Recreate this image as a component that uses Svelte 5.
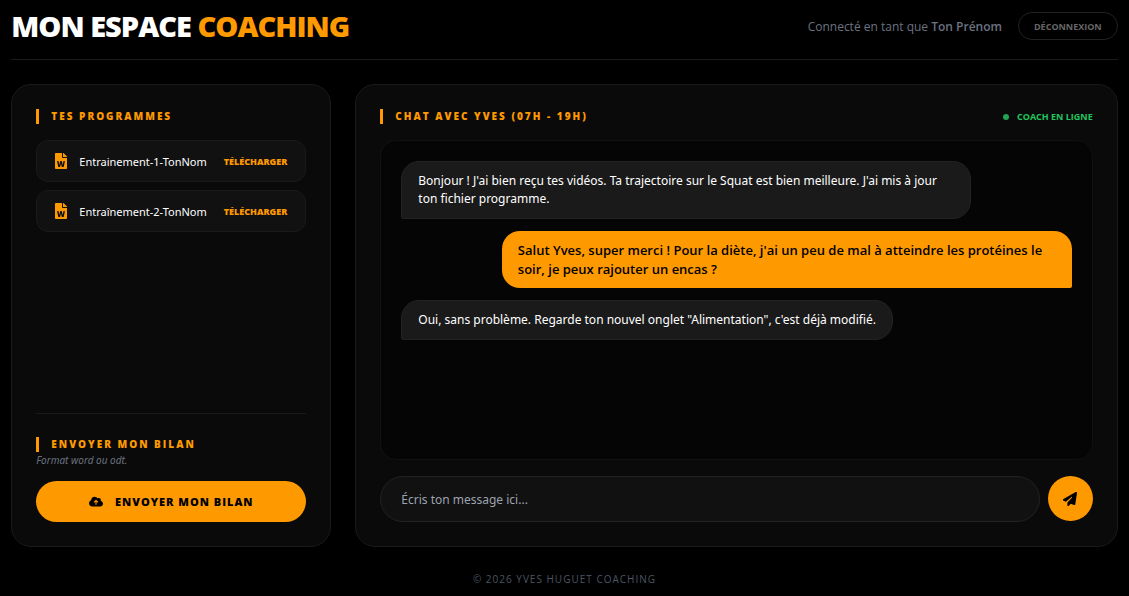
<script>
  const userName = "Ton Prénom";

  const programmes = [
    { name: "Entrainement-1-TonNom", url: "#programme-1" },
    { name: "Entraînement-2-TonNom", url: "#programme-2" }
  ];

  let messages = $state([
    { from: "coach", text: "Bonjour ! J'ai bien reçu tes vidéos. Ta trajectoire sur le Squat est bien meilleure. J'ai mis à jour ton fichier programme." },
    { from: "client", text: "Salut Yves, super merci ! Pour la diète, j'ai un peu de mal à atteindre les protéines le soir, je peux rajouter un encas ?" },
    { from: "coach", text: "Oui, sans problème. Regarde ton nouvel onglet \"Alimentation\", c'est déjà modifié." }
  ]);

  let draft = $state("");

  function sendMessage(event) {
    event.preventDefault();
    if (!draft.trim()) return;
    messages.push({ from: "client", text: draft.trim() });
    draft = "";
  }
</script>

<div class="page">
  <header>
    <h1>Mon espace <span>coaching</span></h1>
    <div class="account">
      <p>Connecté en tant que <strong>{userName}</strong></p>
      <button type="button" class="btn-logout">Déconnexion</button>
    </div>
  </header>

  <main>
    <aside class="card">
      <h2>Tes programmes</h2>
      <ul class="files">
        {#each programmes as file}
          <li>
            <svg viewBox="0 0 384 512" aria-hidden="true"><path d="M224 136V0H24C10.7 0 0 10.7 0 24v464c0 13.3 10.7 24 24 24h336c13.3 0 24-10.7 24-24V160H248c-13.2 0-24-10.8-24-24zm57.1 120H305c7.7 0 13.4 7.1 11.7 14.7l-38 168c-1.2 5.5-6.1 9.3-11.7 9.3h-38c-5.5 0-10.3-3.8-11.6-9.1-25.8-103.5-20.8-81.2-25.6-110.5h-.5c-1.1 14.3-2.4 17.4-25.6 110.5-1.3 5.3-6.1 9.1-11.6 9.1H117c-5.6 0-10.5-3.9-11.7-9.4l-37.8-168c-1.7-7.5 4-14.6 11.7-14.6h24.5c5.7 0 10.7 4 11.8 9.7 15.6 78 20.1 109.5 21 122.2 1.6-10.2 7.3-32.7 29.4-122.7 1.3-5.4 6.1-9.1 11.7-9.1h29.1c5.6 0 10.4 3.8 11.7 9.2 24 100.4 28.8 124 29.6 129.4-.2-11.2-2.6-17.8 21.6-129.2 1-5.6 5.9-9.5 11.5-9.5zM384 121.9v6.1H256V0h6.1c6.4 0 12.5 2.5 17 7l97.9 98c4.5 4.5 7 10.6 7 16.9z" /></svg>
            <span class="file-name">{file.name}</span>
            <a href={file.url}>Télécharger</a>
          </li>
        {/each}
      </ul>

      <section class="bilan">
        <h2>Envoyer mon bilan</h2>
        <p>Format word ou odt.</p>
        <button type="button" class="btn-bilan">
          <svg viewBox="0 0 640 512" aria-hidden="true"><path d="M144 480C64.500 480 0 415.500 0 336c0-62.800 40.200-116.200 96.200-135.900c-.1-2.700-.2-5.400-.2-8.100c0-88.400 71.600-160 160-160c59.300 0 111 32.200 138.700 80.200C409.900 102 428.300 96 448 96c53 0 96 43 96 96c0 12.200-2.300 23.800-6.400 34.600C596 238.400 640 290.100 640 352c0 70.700-57.300 128-128 128H144zm79-217c-9.400 9.400-9.400 24.600 0 33.900s24.600 9.400 33.900 0l39-39V392c0 13.300 10.700 24 24 24s24-10.700 24-24V257.900l39 39c9.400 9.400 24.600 9.400 33.900 0s9.400-24.600 0-33.900l-80-80c-9.400-9.400-24.600-9.400-33.900 0l-80 80z" /></svg>
          Envoyer mon bilan
        </button>
      </section>
    </aside>

    <section class="card">
      <div class="chat-head">
        <h2>Chat avec Yves (07h - 19h)</h2>
        <span class="status">Coach en ligne</span>
      </div>

      <div class="messages">
        {#each messages as message}
          <p class="bubble {message.from}">{message.text}</p>
        {/each}
      </div>

      <form onsubmit={sendMessage}>
        <input type="text" bind:value={draft} placeholder="Écris ton message ici..." aria-label="Ton message" />
        <button type="submit" class="btn-send" aria-label="Envoyer">
          <svg viewBox="0 0 512 512" aria-hidden="true"><path d="M498.100 5.600c10.100 7 15.400 19.100 13.500 31.200l-64 416c-1.500 9.700-7.400 18.200-16 23s-18.900 5.400-28 1.600L284 427.700l-68.500 74.100c-8.900 9.700-22.900 12.900-35.200 8.100S160 493.200 160 480V396.400c0-4 1.500-7.800 4.200-10.700L331.800 202.800c5.800-6.300 5.600-16-.4-22s-15.700-6.400-22-.7L106 360.800 17.700 316.600C7.100 311.300 .3 300.700 0 288.900s5.900-22.800 16.100-28.700l448-256c10.700-6.100 23.900-5.500 34 1.400z" /></svg>
        </button>
      </form>
    </section>
  </main>

  <footer>© 2026 Yves Huguet Coaching</footer>
</div>

<style>
  :global(body) {
    background: #000;
  }

  .page {
    width: 98%;
    margin: 0 auto;
    font-family: "Noto Sans", "Open Sans", sans-serif;
    font-size: 12px;
    color: #fff;
  }

  h1, h2, p, ul { margin: 0; padding: 0; }

  h1, h2, .btn-bilan, .btn-logout, .status, .files a {
    font-family: "Open Sans", "Noto Sans", sans-serif;
    text-transform: uppercase;
  }

  input { font-family: inherit; }

  button { cursor: pointer; }

  svg { fill: currentColor; flex: none; }

  header {
    display: flex;
    justify-content: space-between;
    align-items: center;
    padding: 8px 0 15px;
    border-bottom: 1px solid #1a1a1a;
  }

  h1 {
    font-size: 29px;
    line-height: 36px;
    font-weight: 800;
    letter-spacing: -1px;
  }

  h1 span { color: #ff9900; }

  .account {
    display: flex;
    align-items: center;
    gap: 16px;
    color: #6b7280;
    font-family: "Open Sans", "Noto Sans", sans-serif;
  }

  .account strong { font-weight: 600; }

  .btn-logout {
    height: 28px;
    padding: 0 15px;
    border: 1px solid #222;
    border-radius: 14px;
    background: transparent;
    color: #666;
    font-size: 9px;
    font-weight: 700;
  }

  main {
    display: grid;
    grid-template-columns: 320px 1fr;
    gap: 24px;
    margin-top: 24px;
  }

  .card {
    display: flex;
    flex-direction: column;
    padding: 24px;
    background: #0a0a0a;
    border: 1px solid #1a1a1a;
    border-radius: 20px;
  }

  h2 {
    padding-left: 12px;
    border-left: 3px solid #ff9900;
    color: #ff9900;
    font-size: 10px;
    line-height: 15px;
    font-weight: 800;
    letter-spacing: 2px;
  }

  .files {
    display: flex;
    flex-direction: column;
    gap: 8px;
    margin-top: 16px;
    list-style: none;
  }

  .files li {
    display: flex;
    align-items: center;
    height: 40px;
    padding: 0 18px;
    background: #111;
    border: 1px solid #1a1a1a;
    border-radius: 12px;
  }

  .files svg {
    height: 16px;
    color: #ff9900;
  }

  .file-name {
    flex: 1;
    margin-left: 12px;
    font-size: 11px;
  }

  .files a {
    color: #ff9900;
    font-size: 9px;
    font-weight: 800;
    text-decoration: none;
  }

  .bilan {
    margin-top: auto;
    padding-top: 23px;
    border-top: 1px solid #1a1a1a;
  }

  .bilan p {
    margin-bottom: 12px;
    color: #6b7280;
    font-size: 10px;
    line-height: 17px;
    font-style: italic;
  }

  .btn-bilan {
    display: flex;
    align-items: center;
    justify-content: center;
    gap: 12px;
    width: 100%;
    height: 41px;
    border: none;
    border-radius: 21px;
    background: #ff9900;
    color: #000;
    font-size: 11px;
    font-weight: 800;
    letter-spacing: 1px;
  }

  .btn-bilan svg { width: 14px; }

  .chat-head {
    display: flex;
    align-items: center;
    justify-content: space-between;
  }

  .status {
    display: flex;
    align-items: center;
    gap: 8px;
    color: #22c55e;
    font-size: 9px;
    line-height: 15px;
    font-weight: 700;
  }

  .status::before {
    content: "";
    width: 6px;
    height: 6px;
    border-radius: 50%;
    background: #22a352;
  }

  .messages {
    display: flex;
    flex-direction: column;
    align-items: flex-start;
    gap: 12px;
    min-height: 278px;
    margin: 16px 0;
    padding: 20px;
    background: #050505;
    border: 1px solid #111;
    border-radius: 16px;
  }

  .bubble {
    box-sizing: border-box;
    max-width: 85%;
    padding: 10px 16px;
    border-radius: 18px;
    line-height: 18px;
  }

  .coach {
    background: #1a1a1a;
    border: 1px solid #222;
    border-bottom-left-radius: 2px;
  }

  .client {
    align-self: flex-end;
    padding-bottom: 9px;
    background: #ff9900;
    border-bottom-right-radius: 2px;
    color: #000;
    font-family: "Open Sans", "Noto Sans", sans-serif;
    font-size: 13px;
    font-weight: 600;
    line-height: 19px;
  }

  form {
    display: flex;
    align-items: flex-start;
    gap: 8px;
  }

  input {
    flex: 1;
    min-width: 0;
    height: 46px;
    box-sizing: border-box;
    padding: 0 20px;
    background: #111;
    border: 1px solid #222;
    border-radius: 23px;
    color: #fff;
    font-size: 12px;
    outline: none;
  }

  input::placeholder { color: #9ca3af; }

  .btn-send {
    display: flex;
    align-items: center;
    justify-content: center;
    width: 45px;
    height: 45px;
    padding: 0;
    border: none;
    border-radius: 50%;
    background: #ff9900;
    color: #000;
  }

  .btn-send svg { width: 14px; }

  footer {
    padding: 24px 0 9px;
    color: #4b5563;
    font-family: "Open Sans", "Noto Sans", sans-serif;
    font-size: 10px;
    line-height: 16px;
    letter-spacing: 1px;
    text-align: center;
    text-transform: uppercase;
  }
</style>
